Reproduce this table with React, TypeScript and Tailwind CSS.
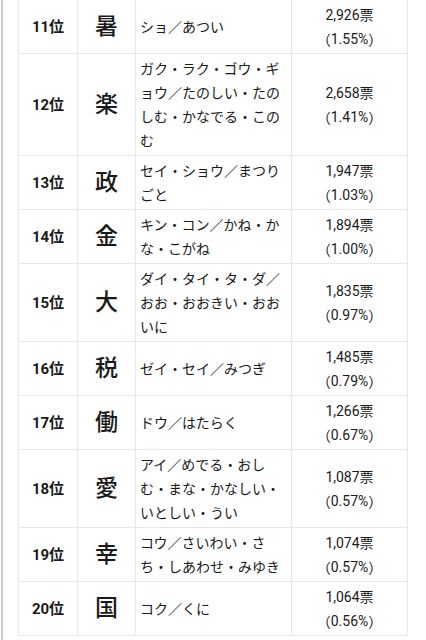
import React from 'react';

type Row = { rank: string; kanji: string; lines: string[]; votes: string; pct: string };

const ROWS: Row[] = [
  { rank: '11位', kanji: '暑', lines: ['ショ／あつい'], votes: '2,926票', pct: '1.55%' },
  { rank: '12位', kanji: '楽', lines: ['ガク・ラク・ゴウ・ギ', 'ョウ／たのしい・たの', 'しむ・かなでる・この', 'む'], votes: '2,658票', pct: '1.41%' },
  { rank: '13位', kanji: '政', lines: ['セイ・ショウ／まつり', 'ごと'], votes: '1,947票', pct: '1.03%' },
  { rank: '14位', kanji: '金', lines: ['キン・コン／かね・か', 'な・こがね'], votes: '1,894票', pct: '1.00%' },
  { rank: '15位', kanji: '大', lines: ['ダイ・タイ・タ・ダ／', 'おお・おおきい・おお', 'いに'], votes: '1,835票', pct: '0.97%' },
  { rank: '16位', kanji: '税', lines: ['ゼイ・セイ／みつぎ'], votes: '1,485票', pct: '0.79%' },
  { rank: '17位', kanji: '働', lines: ['ドウ／はたらく'], votes: '1,266票', pct: '0.67%' },
  { rank: '18位', kanji: '愛', lines: ['アイ／めでる・おし', 'む・まな・かなしい・', 'いとしい・うい'], votes: '1,087票', pct: '0.57%' },
  { rank: '19位', kanji: '幸', lines: ['コウ／さいわい・さ', 'ち・しあわせ・みゆき'], votes: '1,074票', pct: '0.57%' },
  { rank: '20位', kanji: '国', lines: ['コク／くに'], votes: '1,064票', pct: '0.56%' },
];

const cell = 'border border-[#e8e8e8] align-middle py-[2.5px]';
const paren = 'inline-block align-top h-[24px] leading-[24px] w-[14px] font-["Noto_Sans_CJK_JP"]';

const App: React.FC = () => {
  return (
    <div
      className="flex w-[426px] h-[640px] overflow-hidden bg-white text-[#1a1a1a]"
      style={{ fontFamily: 'Roboto, "Noto Sans CJK JP", sans-serif' }}
    >
      {/* page edge */}
      <div className="w-[2px] shrink-0 bg-[#cfcfcf] ml-px" />
      <div className="pl-[15px] -mt-px">
        <table className="table-fixed border-collapse w-[389px] text-[14px] leading-[24px]">
          <colgroup>
            <col className="w-[59px]" />
            <col className="w-[58px]" />
            <col className="w-[156px]" />
            <col className="w-[116px]" />
          </colgroup>
          <tbody>
            {ROWS.map(r => (
              <tr key={r.rank}>
                <td className={`${cell} text-center font-bold text-[15px]`}>{r.rank}</td>
                <td className={`${cell} text-center text-[23px] font-medium`}>{r.kanji}</td>
                <td className={`${cell} px-[4px] whitespace-nowrap`}>
                  {r.lines.map((l, i) => (
                    <span key={i} className="block">{l}</span>
                  ))}
                </td>
                <td className={`${cell} text-center`}>
                  <span className="block">{r.votes}</span>
                  <span className="block h-[24px]">
                    <span className={`${paren} text-right`}>（</span>
                    {r.pct}
                    <span className={`${paren} text-left`}>）</span>
                  </span>
                </td>
              </tr>
            ))}
          </tbody>
        </table>
      </div>
    </div>
  );
};

export default App;
